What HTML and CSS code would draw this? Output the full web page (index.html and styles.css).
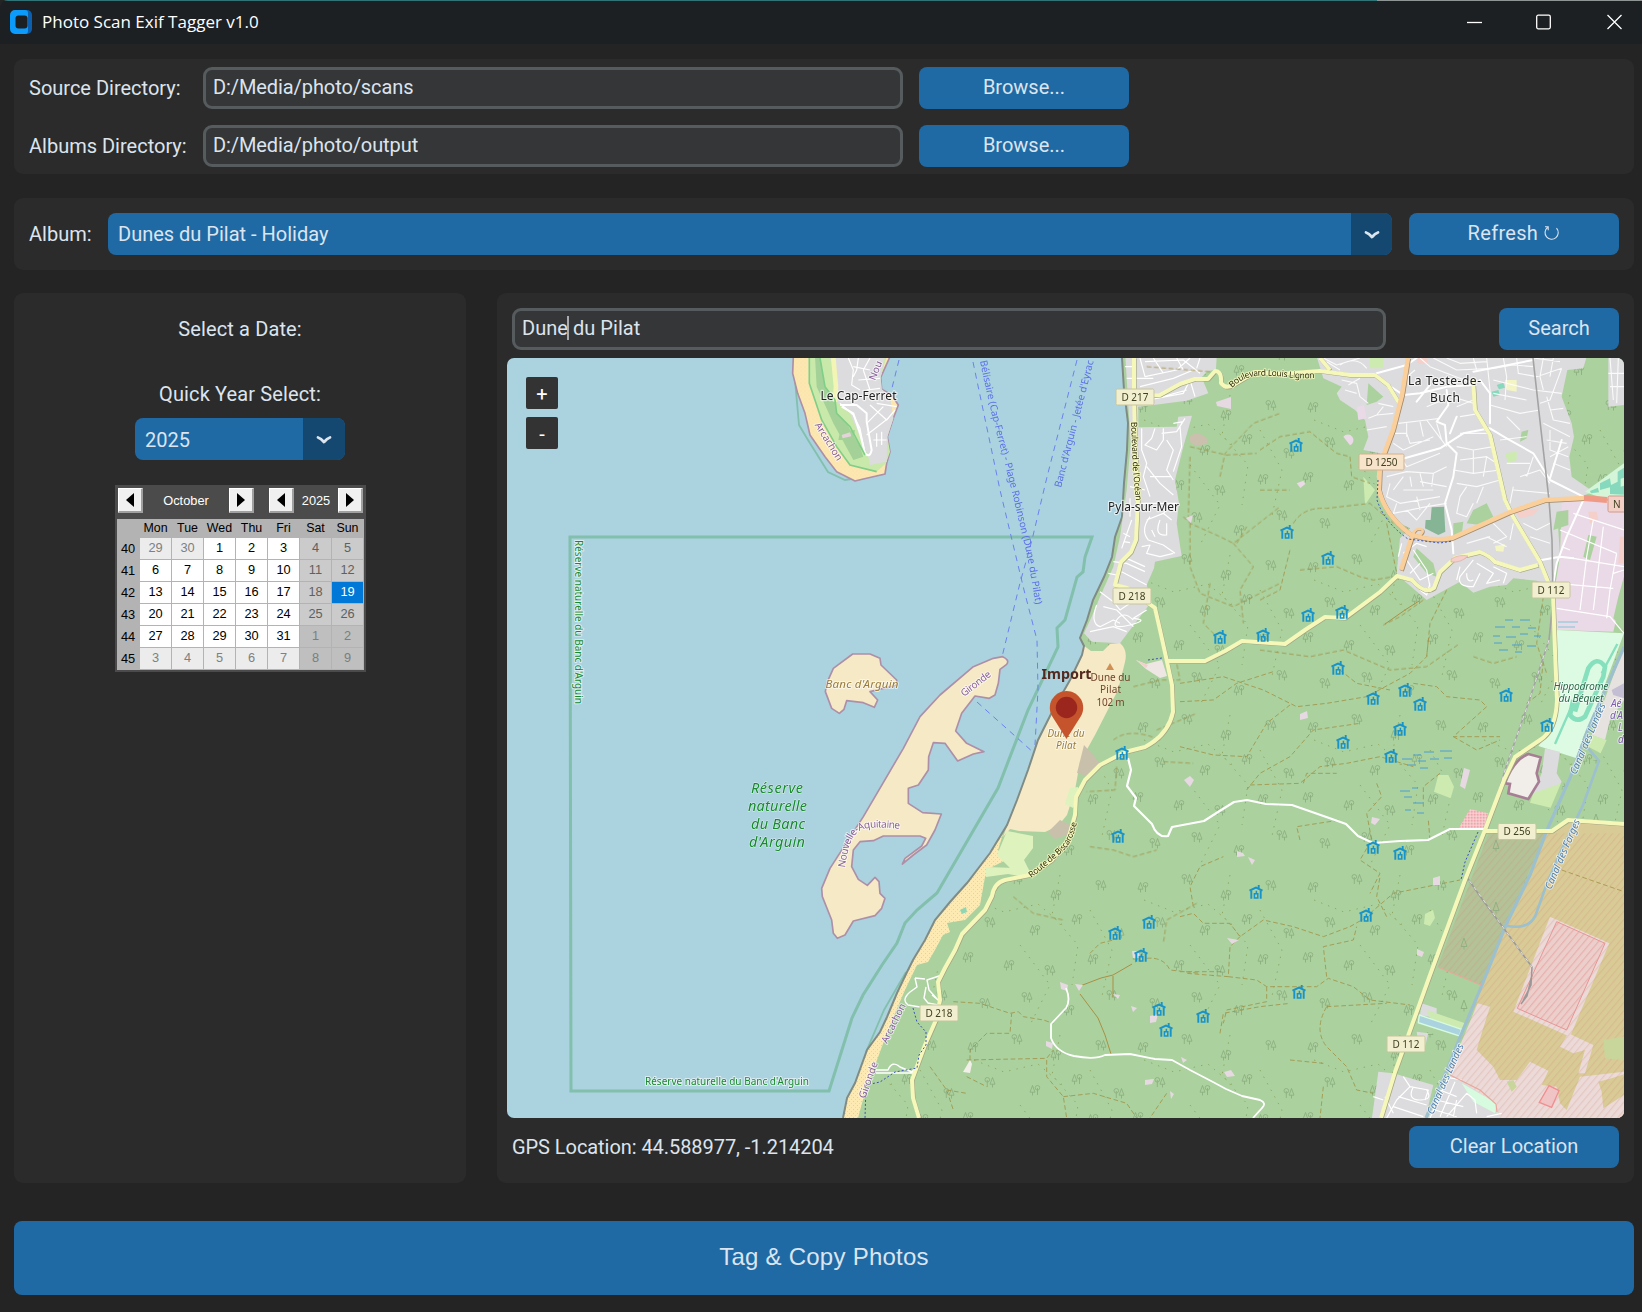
FILE: index.html
```html
<!DOCTYPE html>
<html lang="en">
<head>
<meta charset="utf-8">
<title>Photo Scan Exif Tagger v1.0</title>
<link rel="stylesheet" href="styles.css">
</head>
<body>
<header class="titlebar">
  <svg class="logo" width="24" height="26" viewBox="0 0 24 26"><rect x="5" y="1" width="18" height="24" rx="5" fill="#0a5fae"/><path d="M6 1h10a3 3 0 0 1 3 3v18a3 3 0 0 1-3 3H6a5 5 0 0 1-5-5V6a5 5 0 0 1 5-5z" fill="#0c9bfb"/><rect x="6.500" y="6.500" width="12" height="13" rx="3" fill="#1c2023"/></svg>
  <span class="title">Photo Scan Exif Tagger v1.0</span>
  <div class="winbtns">
    <svg width="15" height="16" viewBox="0 0 15 16"><path d="M0 8.500h15"/></svg>
    <svg width="15" height="16" viewBox="0 0 15 16"><rect x=".7" y="1.200" width="13.600" height="13.600" rx="1.500"/></svg>
    <svg class="close" width="15" height="16" viewBox="0 0 15 16"><path d="M.5 1l14 14M14.500 1L.5 15"/></svg>
  </div>
</header>
<main>
  <section class="panel dirs">
    <label>Source Directory:</label><div class="entry">D:/Media/photo/scans</div><button>Browse...</button>
    <label>Albums Directory:</label><div class="entry">D:/Media/photo/output</div><button>Browse...</button>
  </section>
  <section class="panel album">
    <label>Album:</label>
    <div class="option"><span>Dunes du Pilat - Holiday</span><i><svg width="16" height="10" viewBox="0 0 16 10"><path d="M2 2.500Q5 3.500 8 7Q11 3.500 14 2.500"/></svg></i></div>
    <button class="refresh">Refresh <svg class="reload" width="16" height="16" viewBox="0 0 16 16"><path d="M3.500 2.500A6.600 6.600 0 1 0 12.500 3.200M1 1.800h3.200v3.400"/></svg></button>
  </section>
  <div class="columns">
    <section class="panel date">
      <p class="pick">Select a Date:</p>
      <p class="quick">Quick Year Select:</p>
      <div class="option year"><span>2025</span><i><svg width="16" height="10" viewBox="0 0 16 10"><path d="M2 2.500Q5 3.500 8 7Q11 3.500 14 2.500"/></svg></i></div>
      <div class="calendar">
        <div class="calhead"><b class="prev"></b><span class="month">October</span><b class="next"></b><b class="prev gap"></b><span class="yr">2025</span><b class="next"></b></div>
        <div class="days">
          <span></span><em>Mon</em><em>Tue</em><em>Wed</em><em>Thu</em><em>Fri</em><em>Sat</em><em>Sun</em>
          <span>40</span><u class="o">29</u><u class="o">30</u><u>1</u><u>2</u><u>3</u><u class="w">4</u><u class="w">5</u>
          <span>41</span><u>6</u><u>7</u><u>8</u><u>9</u><u>10</u><u class="w">11</u><u class="w">12</u>
          <span>42</span><u>13</u><u>14</u><u>15</u><u>16</u><u>17</u><u class="w">18</u><u class="sel">19</u>
          <span>43</span><u>20</u><u>21</u><u>22</u><u>23</u><u>24</u><u class="w">25</u><u class="w">26</u>
          <span>44</span><u>27</u><u>28</u><u>29</u><u>30</u><u>31</u><u class="wo">1</u><u class="wo">2</u>
          <span>45</span><u class="o">3</u><u class="o">4</u><u class="o">5</u><u class="o">6</u><u class="o">7</u><u class="wo">8</u><u class="wo">9</u>
        </div>
      </div>
    </section>
    <section class="panel place">
      <div class="search"><div class="entry">Dune<span class="caret"></span> du Pilat</div><button class="small">Search</button></div>
      <div class="map">
<svg width="1117" height="760" viewBox="507 358 1117 760">
<defs>
  <g id="pair" class="tree"><circle cx="2.300" cy="2.800" r="2.300"/><path d="M2.300 3v7M7.500 0.500L5 7.200h5zM7.500 7.200v3.300"/></g>
  <g id="riap" class="tree"><circle cx="7.500" cy="2.800" r="2.300"/><path d="M7.500 3v7M2.500 0.500L0 7.200h5zM2.500 7.200v3.300"/></g>
  <g id="fir" class="tree"><path d="M4 0L1 8.500h6zM4 8.500v3"/></g>
  <pattern id="wood" width="170" height="160" patternUnits="userSpaceOnUse" x="1130" y="390">
    <use href="#riap" x="8" y="12"/><use href="#pair" x="52" y="4"/><use href="#riap" x="91" y="20"/><use href="#pair" x="136" y="10"/>
    <use href="#pair" x="25" y="47"/><use href="#riap" x="70" y="55"/><use href="#riap" x="112" y="44"/><use href="#pair" x="154" y="58"/>
    <use href="#riap" x="3" y="82"/><use href="#riap" x="44" y="90"/><use href="#pair" x="85" y="95"/><use href="#riap" x="128" y="84"/>
    <use href="#pair" x="20" y="128"/><use href="#pair" x="62" y="122"/><use href="#riap" x="104" y="135"/><use href="#pair" x="147" y="120"/>
    <path class="dots" d="M14 30l30 12 34-8 28 24M100 5l-8 40 26 30-6 40M60 75l30 40-20 40M130 40l22 40-10 46"/>
  </pattern>
  <pattern id="firs" width="66" height="62" patternUnits="userSpaceOnUse"><use href="#fir" x="8" y="8"/><use href="#fir" x="40" y="34"/></pattern>
  <pattern id="sandDots" width="4" height="4" patternUnits="userSpaceOnUse"><rect width="4" height="4" fill="#fde9b2"/><rect x="1" y="1" width="1" height="1" fill="#f2cb92"/><rect x="3" y="3" width="1" height="1" fill="#f4d59f"/></pattern>
  <pattern id="stripe" width="16" height="9" patternUnits="userSpaceOnUse" patternTransform="rotate(40)"><path d="M2 0V9" stroke="#cf8f80" stroke-opacity=".3" stroke-width="3"/></pattern>
  <pattern id="redStripe" width="16" height="9" patternUnits="userSpaceOnUse" patternTransform="rotate(40)"><rect width="16" height="9" fill="#eccfcb"/><path d="M2 0V9" stroke="#e6a9a8" stroke-width="3"/></pattern>
  <pattern id="orchard" width="9" height="9" patternUnits="userSpaceOnUse"><rect width="9" height="9" fill="#f5c3c6"/><rect x="1" y="1" width="3" height="3" fill="#e77f8d"/><rect x="5" y="5" width="3" height="3" fill="#fbe0e0"/></pattern>
  <g id="hut"><path d="M.5 6.200L7 3l6.500 3.200" stroke-width="2"/><path d="M9.700 4V.4M2.300 6v8.200M11.700 6v8.200" stroke-width="1.900"/><path d="M5.400 13.600V9.300h3.400v4.300zM7.400 9V6.200" stroke-width="1.500"/></g>
</defs>
<rect x="507" y="358" width="1117" height="760" fill="#aad3df"/>

<!-- nature reserve outline -->
<path class="reserve" d="M570 537H1092L1085 557 1083 572 1077 577 1065 620 1057 628 1058 647 1028 710 998 788 937 893 917 910 905 923 897 943 882 965 863 995 852 1018 829 1091H571Z"/>
<path class="reserve thin" d="M906 972L884 1010 866 1052M795 380L799 425 808 440 828 472 845 480 884 474"/>

<!-- mainland -->
<path id="land" d="M1122 358L1124 390 1128 423 1127 450 1124 483 1122 517 1115 537 1112 557 1104 577 1093 600 1087 620 1080 638 1084 646 1082 655 1070 680 1053 710 1038 740 1028 770 1017 800 1007 825 990 853 967 883 950 902 935 920 925 940 913 960 907 972 897 993 887 1017 880 1032 867 1050 855 1083 847 1098 843 1118H1624V358Z" fill="#abd19e"/>
<path d="M1122 358L1124 390 1128 423 1127 450 1124 483 1122 517 1115 537 1112 557 1104 577 1093 600 1087 620 1080 638 1084 646 1150 660 1100 780 1050 850 990 900 930 980 870 1118H1560L1624 900V358Z" fill="url(#wood)"/>

<!-- dune and beaches -->
<path d="M1083 645L1091 651 1103 651 1110 644 1120 643Q1128 650 1125 662L1118 690 1095 735 1080 762 1075 790 1067 815 1058 826 1045 832 1019 831 1010 829 1003 837 1017 800 1028 770 1038 740 1053 710 1070 680 1082 655Z" fill="#f5e9c6"/>
<path d="M1003 834L998 850 1006 860 990 868 985 877 980 905 965 920 947 923 950 932 943 935 935 950 928 962 917 965 905 990 890 1025 877 1060 867 1085 858 1118H843L847 1098 855 1083 867 1050 880 1032 897 993 913 960 935 920 967 883Z" fill="url(#sandDots)"/>
<path d="M1084 745L1095 757 1101 765 1090 777 1077 773ZM1048 832L1060 820 1072 826 1070 834 1055 839Z" fill="#c8c0ab"/>
<path d="M1007 831L1033 836 1033 848 1024 860 1030 872 1010 868 997 855ZM1070 788L1078 787 1078 800 1073 808 1065 804ZM986 867L1015 868 1029 872 1025 877 1008 874 986 877Z" fill="#ddf2bd"/>
<path d="M960 910l6-3 1 5-5 2z" fill="#8fd6b4"/>
<path d="M1136 660L1146 664 1162 660 1167 676 1160 678 1146 669Z" fill="#eee6e2"/><path d="M1136 660l12 5 -2 3z" fill="#f3cfcc"/>

<!-- Cap-Ferret -->
<g transform="translate(500 290) scale(.33333)">
  <path class="coast" fill="url(#sandDots)" d="M880 200L878 250 893 310 915 370 930 435 975 500 1010 545 1065 573 1090 567 1155 552 1160 520 1170 485 1162 440 1180 385 1195 345 1175 315 1145 298 1142 262 1170 200Z"/>
  <path d="M928 200L928 280 965 390 1010 470 1050 525 1130 545 1158 520 1170 485 1162 440 1180 385 1170 320 1145 298 1142 262 1160 200Z" fill="#c9e9ab"/>
  <path d="M960 200L975 290 1005 330 1010 370 1040 400 1080 470 1090 500 1060 510 1000 400 950 290 945 200ZM1020 425L1065 420 1060 450 1015 450Z" fill="#a4d197"/>
  <path d="M990 200L1005 290 1010 335 1050 370 1105 500 1110 525 1160 515 1162 440 1180 385 1170 320 1145 298 1142 262 1155 200Z" fill="#dcdbdd"/>
  <path class="street" d="M1045 204L1060 240 1055 285 1080 300M1075 204L1070 240 1060 260M1110 204L1090 240 1110 300M1060 230L1110 240M1075 270L1140 265M1100 300L1140 295M1130 340L1190 350M1110 345L1160 390 1185 360M1100 400L1150 350M1100 435L1165 385M1130 430L1130 470M1145 425L1145 465M1120 450L1160 450M1020 340L1060 375 1080 415 1095 490"/>
  <path class="street big" d="M1020 345L1070 345 1100 370 1100 395 1115 480Q1110 505 1095 490L1080 430 1060 370 1025 350"/>
  <path d="M1000 204L1008 290 1005 335" fill="none" stroke="#f3f5b4" stroke-width="14"/>
  <path d="M928 204L928 280 965 390 1010 470 1050 525 1130 545M960 204L975 290 1005 330 1010 370 1050 410 1095 495" fill="none" stroke="#7fcf88" stroke-width="5"/>
  <path d="M1025 435l25-8 4 12-26 6z" fill="#e5d3da"/>
</g>
<!-- sandbanks -->
<g transform="translate(780 630) scale(.33333)" fill="#f5e9c6">
  <path class="coast" d="M140 160L160 115 218 72 270 72 300 85 303 105 350 150 352 165 270 185 293 210 283 232 250 218 200 212 192 238 178 250 155 235 136 185Z"/>
  <path class="coast" d="M580 110L640 85 668 80Q690 90 680 103L660 118 655 160 645 195 628 205 585 198 545 250 527 303 560 340 612 365 580 372 533 393 495 340 460 338 446 380 445 420 415 465 385 475 385 520 428 548 484 552 465 600 440 645 400 675 367 702 375 685 425 648 437 625 420 618 310 618 280 632 240 635 220 660 215 710 235 748 262 766 285 742 297 755 300 790 315 805 305 835 285 857 220 873 195 915 172 925 160 910 155 870 127 800 125 775 150 715 250 560 370 355 420 260 480 195Z"/>
</g>
<path class="shore" d="M1122 358L1124 390 1128 423 1127 450 1124 483 1122 517 1115 537 1112 557 1104 577 1093 600 1087 620 1080 638 1084 646 1082 655 1070 680 1053 710 1038 740 1028 770 1017 800 1007 825 990 853 967 883 950 902 935 920 925 940 913 960 907 972 897 993 887 1017 880 1032 867 1050 855 1083 847 1098 843 1118"/>

<!-- Pyla-sur-Mer -->
<g transform="translate(900 290) scale(.33333)">
  <path fill="#dcdbdd" d="M676 200L950 200 948 238 920 245 905 262 925 310 860 332 755 346 715 350 715 412 830 410 835 380 876 377 850 470 825 570 837 640 830 700 845 798 765 815 762 835 740 885 755 935 720 980 660 1060 575 1055 552 1030 575 980 600 920 640 830 660 740 680 600 692 460Z"/>
  <path class="street" d="M675 230H700M680 265H760M720 204L735 260 830 240 870 204M760 204L790 250M735 215L850 210 900 250M720 290L820 265 880 240M745 330L850 310 870 270 885 320M770 325L860 300M830 204L850 240M900 204L890 235M725 415V480L740 520 730 560 750 620M765 415L755 445 735 465 770 480 790 450 790 415M785 430L830 425 855 385M800 450L820 480 800 540 820 570M740 530L780 580 820 615M750 560H815M690 625V680M725 640L830 640M735 600L690 590M695 690L665 775M670 730L690 740M672 755L690 758M750 680Q720 720 745 750L790 765 825 790M740 690L790 670 815 690M780 690Q760 740 800 735L800 700M790 670L810 650M725 770L750 765 740 790 780 800 820 790M755 720L765 740M625 850L650 855M640 815L680 820 735 845M680 805L735 830M665 845L740 885M600 905L640 935M590 945Q570 1000 600 1010L640 990 660 1000M610 950L650 960 700 1010M640 935L660 960 690 940M700 990Q670 960 650 990T690 1005 700 985L740 960M570 1025L640 1010 680 1025M840 410L845 470 820 545M820 400L850 395"/>
</g>
<!-- La Teste-de-Buch -->
<g transform="translate(1260 290) scale(.33333)">
  <path fill="#dcdbdd" d="M170 200L980 200 970 235 922 240 905 320 935 400 942 440 928 500 935 560 1000 605 930 632 893 690 900 800 870 885 830 872 760 865 740 885 690 890 640 908 600 875 500 930 430 870 410 850 420 745 450 715 400 690 375 640 350 560 360 490 310 480 325 440 315 390 285 360 240 330 230 310 245 290 190 265Z"/>
  <path fill="#dcdbdd" d="M1045 200H1092V345L1045 350Z"/>
  <path fill="#ead9e6" d="M905 640L975 622 1092 640V860L1080 940 1060 1025 890 1020 885 950 885 890 900 800Z"/>
  <path fill="#abd19e" d="M325 280L370 320 350 335 320 345ZM640 660L680 640 700 680 660 705 620 700ZM580 700L610 695 605 735 580 740ZM890 665L925 660 925 705 880 720ZM985 735L1010 740 990 810 970 800ZM785 425L805 420 800 445 780 455ZM1092 860L1075 920 1060 985 1092 1020ZM470 775L520 820 530 860 500 850 460 800Z"/>
  <path fill="#86b596" d="M515 652L552 650 556 725 535 735 495 715 497 690 512 690Z"/>
  <path fill="#d4f5d8" d="M975 605L1092 520V640L1000 615Z"/>
  <path fill="#86d9bc" d="M695 305l20-5 5 15-20 5zM710 285l20-7 5 15-18 5zM1020 580l30-15 3 20 20-10V545l19-12v30l-10 3v24l10-3v27l-42-2v-20l-30 8zM990 603l24-10 3 14-24 3z"/>
  <path fill="#cdebb0" d="M330 204H368L372 235 330 235ZM735 490L770 485 770 510 745 520ZM310 560L345 600 315 645Z"/>
  <path fill="#f3f5c4" d="M735 270L770 270 770 305 740 300ZM705 768l30-5-5 22-22-2z"/>
  <path fill="#f5cfc9" d="M468 204H500L503 222 475 220ZM765 665L840 655 820 675 780 685ZM985 665L1010 665 1015 690 990 700ZM1080 740H1092V820H1075Z"/>
  <path fill="#ead9e6" d="M250 440a17 17 0 1 1 20 26zM110 580l20-8 6 10-15 12zM290 350L312 345 320 385 295 390Z"/>
  <path class="street fine" d="M200 215L240 240M245 270L290 280 300 320 325 340M265 285L300 265M255 300L290 310M190 204L230 225 300 204M240 225Q290 195 320 235M355 340L400 350M325 385L350 375 400 370M320 420L380 410M350 375L370 350M465 240L430 270M480 204L510 230 560 250 640 280M520 204L590 240 700 235 760 225 820 230M560 204L600 220 680 215M640 204L650 240M680 204L690 300 690 380M730 204L740 260 735 330M770 204L775 250 830 260 905 235M820 204L900 215M850 204L840 260 850 300M880 204L870 260M905 235L870 330 840 340M700 270L820 300 905 310M700 310L800 330M690 345L780 370 840 360M860 320L880 390 930 400M870 360L910 355M850 400L930 440M720 450L800 440M740 380L780 420M870 420L870 480 925 500M860 450L920 460M880 520L930 540M870 500L925 470M415 400L500 390 540 385M405 430L440 430 450 460 510 450M400 460L430 480 520 440M440 400L440 440M480 395L490 440M500 390L530 430 560 470M530 400L545 450M420 500L440 530 540 490M380 560L440 545 520 550 560 530M400 600L430 560M390 580L380 620 420 640 540 620M410 640L400 670 500 650 560 640M430 600L520 600M450 560L455 590M480 550L490 590M520 550L515 590M560 590L480 575M440 660L470 690 510 640M470 620L480 660M590 470L640 480 700 470M600 510L680 500 710 520M600 430L690 430M580 540L640 550 720 540M590 580L650 590 720 570M640 480L640 550M620 590L600 620 590 670 620 680 640 640M680 500L670 560M670 590L650 640M590 350L640 330M600 380L660 370M575 320L640 340M530 310L500 300M500 350L550 330M780 560L840 540 870 580M760 600L870 610M750 640L760 590M740 520L810 520M820 500L800 560M790 700L830 720 870 700M810 740L870 760M700 700L740 740 700 760M760 700L750 750M680 740L740 770M620 760L690 740M1050 204L1060 330M1075 204L1070 340M1045 250H1092M1050 290H1092"/>
  <path class="street" d="M430 790L470 760 500 770M440 810L480 870 520 850M450 850L480 820M460 780L500 840 510 890M480 900L500 915 510 880M600 830L590 870M640 810L600 860Q590 890 640 890L660 850M650 820L700 850 680 880 720 870M700 830L740 850 730 880M620 850Q620 880 640 870M425 760L415 800"/>
  <path class="street" d="M940 670L1092 720M900 720L1070 790M890 880L1060 895M940 805L1092 830M1000 690L980 800 960 960M1030 710L1000 960M1070 790L1050 900 1040 985M890 955L1050 980 1092 1030M905 770L930 780M1060 850L1092 840"/>
  <path class="street big" d="M350 250L440 225 470 204M355 265L430 315 480 310 560 290 640 285M510 285L470 335M660 270L690 310 690 400M560 300L565 345 530 395 555 405 560 460 590 490 580 560 555 640 575 720 580 790M415 510L540 475 610 430 690 415 740 445 820 490 870 570 970 620M590 380L570 430M640 245L820 210M970 630L920 740 890 820 880 880M845 810L900 800 940 805M905 450L870 565" stroke-linecap="round"/>
</g>

<!-- hippodrome, airport and military area -->
<g transform="translate(1180 640) scale(.33333)">
  <path fill="#ddfbe3" d="M1130 -30L1332 -20 1250 200 1210 290 1190 355 1075 318 1110 275 1132 220Z"/>
  <path fill="#e6e2e0" d="M1332 20V180L1290 240 1275 300 1235 285Z"/>
  <path fill="#c3bed2" d="M1295 150L1332 130V175L1300 165Z"/>
  <path fill="none" stroke="#86e0bd" stroke-width="14" d="M1185 215L1225 85Q1250 45 1275 80L1270 110 1215 230Q1190 250 1170 225L1180 180"/>
  <path fill="none" stroke="#86e0bd" stroke-width="7" d="M1312 12L1265 100M1170 210L1125 312"/>
  <path fill="#dcdbdd" d="M1095 325L1140 335 1130 400 1145 425 1115 470 1060 460 1085 400Z"/>
  <path fill="#cdebb0" d="M1060 460L1143 430 1112 503 1050 488ZM775 405L805 405 822 440 812 475 762 455ZM1235 285L1280 300 1262 340 1225 320Z"/>
  <path fill="#f1eeea" stroke="#a77f94" stroke-width="8" d="M1045 342L1082 352 1070 400 1077 425 1045 477 985 460 990 432 975 430Q1000 360 1045 342Z"/>
  <path fill="url(#orchard)" d="M870 507L925 520 910 567 836 565Z"/>
  <path fill="#b4c297" d="M925 583L1095 580 905 1035 773 980Z"/>
  <path fill="#d9cb96" d="M1100 580L1180 545 1332 555V1434H900L850 1220 905 1035Z"/>
</g>
<path d="M1488 835L1545 833 1482 985 1438 967ZM1570 765L1624 755V820L1550 822ZM1440 970L1482 987 1467 1023 1420 1020ZM1420 1030L1455 1040 1440 1085 1410 1070Z" fill="url(#firs)"/>
<g transform="translate(1180 900) scale(.33333)">
  <path fill="#ecdad8" d="M893 310L930 320 905 400 890 450 940 500 960 540 1010 540 1050 485 1105 512 1085 555 1130 560 1140 610 1160 630 1200 530 1332 515V660H965L945 610 805 520ZM1140 440L1165 400 1240 435 1215 520 1195 520 1215 450 1180 460ZM1000 335L1110 50 1288 130 1170 410Z"/>
  <path fill="#d9cb96" d="M1255 545l40-10 37-12v62l-62 40-5-50z"/>
  <path fill="url(#stripe)" d="M1100 -200H1332V654H965L945 610 805 520 905 255ZM775 200L925 -200 1100 -200 905 255Z"/>
  <path fill="url(#redStripe)" stroke="#e79696" stroke-width="3" d="M1130 65L1275 130 1160 390 1012 325Z"/>
  <path fill="#f0c4c4" stroke="#ef8f8f" stroke-width="4" d="M1107 557l30 15-22 50-37-15z"/>
  <path fill="#c9d69b" d="M1270 420L1332 410V480L1275 475ZM980 545l20-5 10 20-15 15z"/>
  <path fill="#dcdbdd" d="M595 515L640 520 760 555 735 660H575Z"/>
  <path fill="#dcdbdd" d="M810 520L945 610 965 660H740ZM725 310L770 325 770 355 720 345ZM710 395L745 400 735 440 715 430Z"/>
  <path fill="#d6fbdf" d="M845 550L950 610 945 640 880 605Z"/>
  <path fill="#cdebb0" d="M740 330L855 370 845 390 750 355Z"/>
  <path fill="#aad3df" stroke="#d6fbdf" stroke-width="4" d="M718 345L845 388 838 408 715 368Z"/>
  <path class="street" d="M670 530L690 560 650 600 620 654M690 560L745 570 735 600M655 590L740 615M640 620L730 650M700 560Q680 600 720 600T740 570M615 590L640 640M580 590L610 600M800 540L750 654M825 545L780 650M780 570L830 590M770 600L850 620M800 650L860 580 885 600 890 640M830 600L820 650M765 630L830 650M790 530L845 540M920 650L965 640"/>
</g>

<!-- tracks -->
<g class="track">
  <path transform="translate(1260 290) scale(.33333)" d="M0 480L60 440 150 425 180 450 230 490 270 500 275 560 330 580M0 600L90 600M100 700Q130 650 200 655L330 640 400 700M120 840L230 830 300 860 340 870 400 860M0 930L60 900 90 780M380 700L410 850M490 930L420 980 370 1005M500 1100L510 1000 560 900M0 1080L150 1100 250 1080 390 1140 500 1130 600 1060M850 920L830 1060 860 1150M640 1100L700 1120 770 1100"/>
  <path transform="translate(900 290) scale(.33333)" d="M740 230L930 245M870 470L980 495 1070 490M960 560L975 490 1060 400 1140 370M850 680L870 700 960 740 1000 760 1140 650M870 700L870 830 900 910 1000 950 1140 880M1000 760L1060 830 1020 900 1030 1000M870 500L865 680M930 880L910 1000 950 1040M1040 710L1010 760"/>
  <path transform="translate(780 630) scale(.33333)" d="M1060 170L1140 150 1200 150 1190 100M1000 330Q1050 290 1140 330M1150 395L1240 400M1010 410L1005 480 920 485M930 650L1000 660 1060 680 1130 660M700 800L760 850 850 870M1250 820L1160 870 1150 940M1130 300L1250 250"/>
  <path transform="translate(1180 640) scale(.33333)" d="M0 185L100 180 170 130 280 95M0 130L130 110 250 150 350 200 440 190 560 170 690 100 740 50 745 0M0 320L100 345 200 350 260 250 330 195M200 450L240 400 330 350 400 270 540 250M210 435L360 430 420 380 500 370 600 350 700 380M370 430L380 400 470 400M590 430L605 470 560 520 575 600 540 660 600 700 570 760M480 90L530 130 630 150M700 130L770 140 800 170 900 180 920 200 820 290 960 290M730 500L730 440 780 400M820 290L890 330 960 300M1040 190L1080 160 1090 60M0 830L40 820 70 850 150 850 180 890 250 840 340 860 430 890 510 860 580 820M180 890L150 920 145 1010 20 1000M40 800L30 740 60 680 130 650M360 600L350 560 480 540M570 820L640 760 840 720M750 600L745 540M440 1010L430 920 520 900 530 860M145 1010L230 1020 260 1040 410 1040 445 1015 520 1040 570 1080 690 1095M260 1040L260 1085 140 1110 130 1150M620 830L590 770 600 710M1145 690L1332 755"/>
  <path transform="translate(1180 900) scale(.33333)" d="M0 215L130 215M120 400L130 340 240 320 330 310M440 320L620 310M440 320Q400 390 440 440L500 500 530 570 580 580M330 480L430 490M430 560L420 654"/>
  <path transform="translate(780 880) scale(.33333)" d="M520 365L600 370 690 400 715 395 730 410 790 420 820 430M570 540L570 510 620 460 690 460 695 400M450 560L500 630 520 690M500 630L560 640M560 590L620 620M560 540L800 535 820 510M800 540L800 590 850 650 860 714M850 650L940 640 1040 670 1070 714M1160 640L1110 714M1100 235Q1150 230 1170 270L1260 280M930 220L960 190 1000 180"/>
</g>
<g fill="none" stroke="#aa8f45" stroke-width="1">
  <path d="M1080 986L1101 978 1113 975 1132 964M1113 976V997M1080 994L1098 1018 1105 1035 1111 1054M1385 624L1405 610 1419 601"/>
</g>
<g fill="#e6d9e2">
  <path d="M1216 402l15-5v12l-14-3zM1186 518l7-3-2 8zM1300 714l7-3 1 7-8 2zM1184 780l6-4 4 4-4 7zM1237 851l6 2 2 3-8 1zM1248 857l7 3-3 5zM1227 938l12 2-7 4zM1060 982l8 3-1 6-6-2zM1075 984l8 1-4 6zM1046 1041l7 2-1 6-6-3zM1132 951h7v7h-6zM1150 1016l8-2-2 8-6 1zM1131 1006l6 2-4 4zM1113 994l7 1-2 4zM1145 1080l9-1-2 5-7 1zM1170 1091l4 3-3 5zM1181 1057l6 3-4 3zM1224 1072l7-2 4 6-8 1zM1433 878l7-2v9h-7zM1372 817l8 2-5 6-4-2zM1417 949l7 3-2 5-5-2zM1464 768l6 2-2 8-3 11-5-3z"/>
</g>
<path d="M1190 436q7-5 14 0t2 8l-10 2-6-4z" fill="#cbbfae"/>
<path d="M970 1060l2 4-2 9-7-1z" fill="#f2efe9"/>
<path d="M1425 914l8-4 2 8-5 8-6-2z" fill="#cdebb0"/>
<path class="marsh" d="M1505 620h8M1520 620h10M1495 627h10M1512 627h8M1528 628h8M1493 636h7M1506 637h10M1520 634h8M1534 636h7M1494 643h8M1512 645h9M1527 646h9M1499 650h9M1515 652h7M1413 755h8M1424 752h10M1440 751h12M1402 759h10M1418 761h8M1430 759h9M1444 758h8M1407 765h9M1420 768h8M1400 791h10M1412 788h6M1404 797h8M1413 803h10M1405 810h6M1417 813h7"/>
<path d="M1558 622h20M1558 627h17" stroke="#a3cbdc" stroke-width="1.500"/>

<!-- canals -->
<g fill="none" stroke="#9cc0ce" stroke-width="3.200">
  <path d="M1624 647L1588 729 1570 778 1547 830 1530 875 1506 925 1482 985 1460 1037 1447 1070 1426 1118"/>
  <path d="M1588 748L1599 761 1583 805 1560 853 1546 886 1536 914Q1530 930 1507 926" stroke-width="2.600"/>
</g>

<!-- railways -->
<path d="M1533 358L1541 430 1549 500 1552 540 1553 600 1549 640 1528 704 1505 770 1490 822 1466 876" fill="none" stroke="#a3a3a3" stroke-width="1.600"/>
<path d="M1466 876L1482 899 1505 930 1532 967 1531 985 1523 1001M1532 975L1527 996 1521 1004" fill="none" stroke="#999" stroke-width="1.500"/>
<path d="M1549 640L1528 704 1505 770 1490 822 1466 876 1505 930 1532 967" fill="none" stroke="#f4f4f4" stroke-width=".8" stroke-dasharray="4 4"/>

<!-- minor roads -->
<g class="white">
  <path d="M1128 758L1131 770 1127 786 1136 798 1134 806 1152 824Q1157 838 1168 836L1172 827 1204 821 1218 812 1234 802 1247 800 1266 804 1292 805 1312 812 1332 819 1346 824 1358 836 1373 843 1400 841 1428 840 1450 829H1484"/>
  <path d="M1066 988Q1071 1000 1066 1008L1051 1024V1038Q1056 1052 1074 1056 1095 1060 1105 1055L1130 1054 1155 1059 1172 1060 1190 1070 1213 1082 1226 1089 1242 1096 1260 1100Q1267 1103 1262 1108L1253 1118" stroke-width="1.800"/>
  <path d="M942 975L927 980 929 990 938 1000 932 995M938 1005L928 1003 924 998 926 987M915 978L917 987 910 992Q901 1000 908 1005L920 1007M915 978L925 979M875 1070L888 1070Q892 1060 900 1067L912 1072 915 1068M876 1073H915" stroke-width="1.400"/>
</g>

<!-- secondary roads -->
<g class="roadcase"><use href="#sec"/></g>
<g class="road" id="sec">
  <path d="M1134 358V390L1135 440 1138 500 1136 540 1131 552 1121 562 1115 585 1127 588 1155 608 1160 630 1166 657 1172 685 1173 712Q1168 735 1145 747L1125 752 1100 765 1085 780 1076 797 1075 815 1068 840 1052 860 1030 875 1005 880Q994 883 992 896L985 910 962 934 955 950 945 968 938 982 940 1000 936 1020 925 1045 912 1080 913 1098 919 1118"/>
  <path d="M1134 396L1160 395 1180 384 1195 379 1208 379 1215 371Q1222 371 1221 383 1226 390 1235 384L1255 372 1280 374 1320 371 1350 375 1375 375 1388 385 1399 403"/>
  <path d="M1320 358L1330 370M1166 661L1205 661 1225 651 1242 641 1285 644 1305 630 1325 617 1345 618 1380 592 1397 576 1412 580Q1425 595 1434 588L1440 572 1455 558 1480 552Q1490 556 1495 562L1520 570 1538 565"/>
  <path d="M1473 378L1475 410 1490 435 1505 500 1512 515 1540 562 1553 594 1555 650 1557 700Q1556 730 1540 740L1515 757 1504 780 1485 830 1465 880 1430 975 1395 1072 1381 1118"/>
  <path d="M1486 831H1552L1568 820 1624 824"/>
</g>
<path d="M1451 559q8-5 17-3-7 7-17 6z" fill="#f5cfc9" stroke="#d9a79c" stroke-width=".6"/>
<!-- primary roads -->
<g class="pricase"><use href="#pri"/></g>
<g class="pri" id="pri">
  <path d="M1408 358L1402 395 1393 430 1380 465 1379 490Q1385 515 1410 534 1430 542 1452 538L1510 512 1545 500 1584 498M1413 533L1401 570"/><path d="M1413 536Q1414 528 1420 529T1419 536" stroke-width="2.500"/>
</g>
<path d="M1584 498L1607 500" stroke="#f09a86" stroke-width="6"/>
<path d="M1438 967L1481 985M1450 1075L1480 1090 1496 1104 1497 1112" fill="none" stroke="#e7a79b" stroke-width="1.200"/>
<path class="cycle" d="M913 1008L917 1022 926 1032 926 1045 919 1055 917 1068 895 1072 880 1082 866 1085 865 1118M1378 480L1377 500Q1384 522 1408 539L1440 543 1453 541M1478 832L1465 862 1461 880M1148 660L1162 658"/>

<!-- ferries -->
<path class="ferry" d="M973 362L1000 490 1024 590 1037 640 1038 690 1035 745M1077 360L1047 477 1032 540 1020 583 1002 657M977 702L1034 753M899 360L892 388"/>

<!-- huts -->
<g fill="none" stroke="#1793cb" transform="translate(-7 -7.500)">
<use href="#hut" x="1296" y="445"/><use href="#hut" x="1287" y="532"/><use href="#hut" x="1328" y="558"/><use href="#hut" x="1308" y="615"/><use href="#hut" x="1342" y="612"/><use href="#hut" x="1263" y="635"/><use href="#hut" x="1220" y="637"/><use href="#hut" x="1338" y="668"/><use href="#hut" x="1373" y="698"/><use href="#hut" x="1405" y="690"/><use href="#hut" x="1420" y="704"/><use href="#hut" x="1506" y="695"/><use href="#hut" x="1122" y="753"/><use href="#hut" x="1118" y="836"/><use href="#hut" x="1149" y="922"/><use href="#hut" x="1115" y="933"/><use href="#hut" x="1141" y="955"/><use href="#hut" x="1400" y="729"/><use href="#hut" x="1343" y="742"/><use href="#hut" x="1391" y="756"/><use href="#hut" x="1547" y="725"/><use href="#hut" x="1373" y="847"/><use href="#hut" x="1400" y="853"/><use href="#hut" x="1256" y="892"/><use href="#hut" x="1366" y="915"/><use href="#hut" x="1299" y="992"/><use href="#hut" x="1203" y="1016"/><use href="#hut" x="1159" y="1009"/><use href="#hut" x="1166" y="1030"/>
</g>

<!-- road shields -->
<g class="shield">
  <rect x="1116" y="389" width="38" height="16" rx="1.500"/><rect x="1113" y="588" width="38" height="16" rx="1.500"/><rect x="1532" y="582" width="38" height="16" rx="1.500"/><rect x="1498" y="823.500" width="38" height="16" rx="1.500"/><rect x="920" y="1005" width="38" height="16" rx="1.500"/><rect x="1387" y="1036" width="38" height="16" rx="1.500"/>
  <rect class="major" x="1359" y="454" width="45" height="16" rx="1.500"/><rect class="national" x="1608" y="496" width="30" height="16" rx="1.500"/>
</g>
<g class="ref">
  <text x="1121.500" y="400.500" textLength="27">D 217</text><text x="1118.500" y="600" textLength="27">D 218</text><text x="1537.500" y="593.500" textLength="27">D 112</text><text x="1503.500" y="835" textLength="27">D 256</text><text x="925.500" y="1017" textLength="27">D 218</text><text x="1392.500" y="1048" textLength="27">D 112</text>
  <text x="1365.500" y="465.500" textLength="32">D 1250</text><text x="1613" y="508">N</text>
</g>

<!-- labels -->
<g class="town">
  <text x="820.500" y="399.500" textLength="76">Le Cap-Ferret</text><text x="1108" y="510.500" textLength="71">Pyla-sur-Mer</text>
  <text x="1408" y="385" textLength="73">La Teste-de-</text><text x="1430" y="402" textLength="30">Buch</text>
</g>
<g class="green big"><text x="751" y="792.500" textLength="52">Réserve</text><text x="748" y="810.500" textLength="59">naturelle</text><text x="751" y="828.500" textLength="54">du Banc</text><text x="749" y="846.500" textLength="56">d'Arguin</text></g>
<g class="green"><text x="645" y="1085" textLength="164">Réserve naturelle du Banc d'Arguin</text><text transform="translate(574.500 540) rotate(90)" x="0" y="0" textLength="164">Réserve naturelle du Banc d'Arguin</text></g>
<g class="brown"><text x="825.500" y="688" textLength="73" class="bank">Banc d'Arguin</text></g>
<g class="brown"><text x="1047.500" y="736.500" textLength="37">Dune du</text><text x="1056" y="748.500" textLength="20">Pilat</text></g>
<g class="peak"><text x="1090.500" y="681" textLength="40">Dune du</text><text x="1100" y="693" textLength="21">Pilat</text><text x="1096.500" y="705.500" textLength="28">102 m</text></g>
<path d="M1106 670l4-7 4 7z" fill="#d08f55"/>
<g class="sport"><text x="1553.500" y="690" textLength="55">Hippodrome</text><text x="1558.500" y="702" textLength="45">du Béquet</text></g>
<g class="aero"><text x="1611" y="707">Aé</text><text x="1610" y="718.500">d'A</text><text x="1618" y="731">L</text><text x="1618" y="743">d</text></g>
<path id="pBel" d="M980 361Q990 410 1001 450T1028 560L1036 607" fill="none"/>
<path id="pEyr" d="M1061 488L1094 360" fill="none"/>
<path id="pLig" d="M1232 388Q1243 377 1256 376T1285 377 1316 378" fill="none"/>
<path id="pOce" d="M1131 422L1133 470 1136 502" fill="none"/>
<path id="pNou" d="M845 868Q848 840 858 832T908 830" fill="none"/>
<path id="pBis" d="M1031 878Q1052 862 1066 848 1074 838 1077 821" fill="none"/>
<g class="ferrytext"><text><textPath href="#pBel" textLength="250">Bélisaire (Cap-Ferret) - Plage Robinson (Dune du Pilat)</textPath></text><text><textPath href="#pEyr" textLength="131">Banc d'Arguin - Jetée d'Eyrac</textPath></text></g>
<g class="roadtext"><text><textPath href="#pLig" textLength="86">Boulevard Louis Lignon</textPath></text><text><textPath href="#pOce" textLength="79">Boulevard de l'Océan</textPath></text><text><textPath href="#pBis" textLength="74">Route de Biscarosse</textPath></text></g>
<g class="admin"><text><textPath href="#pNou" textLength="82">Nouvelle-Aquitaine</textPath></text><text transform="translate(964 697) rotate(-38)" textLength="35">Gironde</text><text transform="translate(814.500 425) rotate(58)" textLength="43">Arcachon</text><text transform="translate(887 1044) rotate(-64)" textLength="43">Arcachon</text><text transform="translate(865 1099) rotate(-70)" textLength="38">Gironde</text><text transform="translate(875 381) rotate(-68)">Nou</text></g>
<g class="water"><text transform="translate(1576 775) rotate(-67)" textLength="76">Canal des Landes</text><text transform="translate(1551 890) rotate(-67)" textLength="75">Canal des Forges</text><text transform="translate(1433 1115) rotate(-66)" textLength="76">Canal des Landes</text></g>

<!-- location marker -->
<path d="M1066.500 739L1052 716A16.700 16.700 0 1 1 1081 716Z" fill="#c5542d"/><circle cx="1066.500" cy="707.500" r="10.700" fill="#9b261e"/>
<text class="marker" x="1041.500" y="679" textLength="50" lengthAdjust="spacingAndGlyphs">Import</text>
</svg>
        <div class="zoom"><span>+</span><span>-</span></div>
      </div>
      <div class="gps"><label>GPS Location: 44.588977, -1.214204</label><button>Clear Location</button></div>
    </section>
  </div>
  <button class="submit">Tag &amp; Copy Photos</button>
</main>
</body>
</html>
```
FILE: styles.css
```css
* { box-sizing: border-box; }
body { margin: 0; width: 1642px; height: 1312px; overflow: hidden; background: #242424; color: #dce4ee; font: 20px/24px Roboto, sans-serif; display: flex; flex-direction: column; }
.titlebar { height: 44px; background: linear-gradient(90deg, #2f7477 1377px, #8f9595 1377px) 0 0 / 100% 1px no-repeat, #1c2023; border-radius: 8px 0 0 0; display: flex; align-items: center; padding: 0 9px 1px 9px; flex: none; }
.title { font: 17px/24px "Open Sans", sans-serif; color: #fff; margin-left: 9px; }
.winbtns { margin-left: auto; display: flex; gap: 54px; padding-right: 11px; }
.winbtns svg { fill: none; stroke: #fff; stroke-width: 1.3; }
.winbtns .close { margin-left: 2px; }
main { flex: 1; padding: 15px 8px 17px 14px; display: flex; flex-direction: column; }
.panel { background: #2b2b2b; border-radius: 9px; }
button { border: 0; border-radius: 8px; background: #1f6aa5; color: #dce4ee; font: inherit; width: 210px; height: 42px; padding: 0 0 2px; flex: none; }
label { white-space: nowrap; }
.entry { height: 42px; border: 3px solid #565b5e; border-radius: 9px; background: #343638; padding: 5px 7px; white-space: pre; position: relative; letter-spacing: -.09px; }
.dirs { height: 115px; padding: 8px 15px; display: grid; grid-template-columns: 157px 699px 210px; column-gap: 17px; row-gap: 16px; align-items: center; align-content: start; }
.dirs .entry { margin-right: -1px; }
.album { height: 72px; margin-top: 24px; padding: 0 15px; display: flex; align-items: center; }
.option { height: 42px; border-radius: 8px; background: #1f6aa5; overflow: hidden; display: flex; align-items: center; justify-content: space-between; padding-left: 10px; }
.option i { width: 41px; height: 42px; background: #144870; display: grid; place-items: center; }
.option svg { fill: none; stroke: #dce4ee; stroke-width: 2.8; stroke-linecap: round; stroke-linejoin: round; margin-top: 1px; }
.album .option { width: 1284px; margin: 0 17px 0 auto; }
.refresh { letter-spacing: .3px; }
.reload { fill: none; stroke: #dce4ee; stroke-width: 1.1; vertical-align: -1px; margin-left: 1px; }
.columns { display: flex; justify-content: space-between; height: 890px; margin-top: 23px; }
.date { width: 452px; display: flex; flex-direction: column; align-items: center; }
.date p { margin: 0; letter-spacing: .13px; }
.date .pick { margin-top: 24px; }
.date .quick { margin-top: 41px; }
.year { width: 210px; margin-top: 12px; }
.year span { padding-top: 1px; }
.year i { width: 42px; }
.calendar { width: 251px; height: 187px; margin: 25px 0 0 1px; background: #4b4b4b; padding: 0 2px 2px; font: 12.800px/20px "Liberation Sans", Arial, sans-serif; color: #000; }
.calhead { height: 34px; display: flex; align-items: flex-start; padding: 3px 1px; color: #fff; line-height: 26px; }
.calhead b { width: 25px; height: 25px; background: #f0f0f0; border: 1px solid #fff; border-right: 2px solid #a0a0a0; border-bottom: 2px solid #a0a0a0; display: grid; place-items: center; }
.calhead b::before { content: ""; border: 7px solid transparent; border-width: 7px 8px; }
.prev::before { border-left-width: 0 !important; border-right-color: #000 !important; }
.next::before { border-right-width: 0 !important; border-left-color: #000 !important; }
.month { width: 86px; text-align: center; }
.gap { margin-left: 15px; }
.yr { width: 44px; text-align: center; }
.days { height: 151px; background: #b3b3b3; display: grid; grid-template-columns: 22px repeat(7, 31px); grid-template-rows: 18px repeat(6, 21px); gap: 1px; text-align: center; }
.days em { font-style: normal; font-size: 12.400px; line-height: 19px; }
.days span { line-height: 22px; }
.days u { text-decoration: none; background: #fff; }
.days .o { background: #ececec; color: #808080; }
.days .w { background: #cbcbcb; color: #606060; }
.days .wo { background: #bfbfbf; color: #7d7d7d; }
.days .sel { background: #0078d7; color: #fff; }
.place { width: 1137px; padding: 15px 10px; }
.search { display: flex; justify-content: space-between; padding: 0 5px; }
.search .entry { width: 874px; letter-spacing: .04px; }
.caret { position: absolute; width: 2px; height: 24px; top: 5px; margin-left: -1px; background: #a8acb0; }
button.small { width: 120px; }
.map { position: relative; margin-top: 8px; width: 1117px; height: 760px; border-radius: 7px; overflow: hidden; }
.map svg { display: block; }
.zoom { position: absolute; left: 19px; top: 19px; display: flex; flex-direction: column; gap: 8px; }
.zoom span { width: 32px; height: 32px; border-radius: 2px; background: #333; color: #fff; font: 20px/34px Roboto, sans-serif; text-align: center; }
.gps { display: flex; justify-content: space-between; padding: 8px 5px 0; align-items: center; letter-spacing: -.06px; }
button.submit { width: 1620px; height: 74px; margin-top: 38px; font: 24px "Liberation Sans", Arial, sans-serif; letter-spacing: .25px; }

/* map features */
.tree { fill: none; stroke: #8caf80; stroke-width: .9; }
.dots { fill: none; stroke: #8fa964; stroke-width: 1; stroke-dasharray: 1.5 6; }
.reserve { fill: none; stroke: #82bfac; stroke-width: 3; }
.reserve.thin { stroke-width: 1.8; }
.coast { stroke: #ae8fa8; stroke-width: 5; stroke-linejoin: round; }
.shore { fill: none; stroke: #808b84; stroke-width: 2; }
.street { fill: none; stroke: #fff; stroke-width: 3.6; stroke-linejoin: round; }
.street.big { stroke-width: 6; }
.street.fine { stroke-width: 3.4; opacity: .85; }
.track { fill: none; stroke: #a08d3f; stroke-width: 3; stroke-dasharray: 14 8; opacity: .75; }
.marsh { fill: none; stroke: #4b9fd0; stroke-width: 1; }
.white { fill: none; stroke: #fff; stroke-width: 2.2; stroke-linejoin: round; }
.road { fill: none; stroke: #f5f8b9; stroke-width: 4; stroke-linejoin: round; }
.pri { fill: none; stroke: #fbcf9a; stroke-width: 4.5; }
.roadcase, .pricase { filter: brightness(.66) saturate(.8); }
.roadcase { transform: translate(.6px, .6px); }
.pricase { transform: translate(.7px, .7px); }
.cycle { fill: none; stroke: #3b53b5; stroke-width: 1; stroke-dasharray: 2 2; }
.ferry { fill: none; stroke: #6c80ee; stroke-width: 1; stroke-dasharray: 6 5; }
.shield rect { fill: #f1efcf; stroke: #c6c69c; stroke-width: 1; }
.shield .major { fill: #f8e3cb; stroke: #d6b18e; }
.shield .national { fill: #f3cfc6; stroke: #cf9a8c; }
.map text { font-family: "Noto Sans", sans-serif; font-size: 10px; paint-order: stroke; stroke: rgba(255, 255, 255, .6); stroke-width: 2px; stroke-linejoin: round; }
.map .ref text { font-size: 10px; stroke: none; fill: #3f4020; }
.map .town text { font-size: 12px; fill: #222; stroke-width: 2.5px; }
.map .green text { fill: #188a2c; }
.map .green.big text { font-size: 14.5px; font-style: italic; stroke-width: 1px; }
.map .brown text { fill: #9b7c38; font-size: 10px; font-style: italic; }
.map .brown .bank { font-size: 11.5px; }
.map .peak text { fill: #73452a; font-size: 10px; stroke: none; }
.map .sport text { fill: #286b4a; font-size: 10.5px; font-style: italic; }
.map .aero text { fill: #7d5cb0; font-size: 10px; font-style: italic; }
.map .ferrytext text { fill: #5c70e8; stroke: none; }
.map .roadtext text { fill: #2b2b10; font-size: 8.6px; stroke: rgba(247, 250, 191, .8); }
.map .admin text { fill: #87609a; }
.map .water text { fill: #4f7fae; font-style: italic; }
.map .marker { font-weight: bold; font-size: 15px; fill: #542a20; stroke: none; }
```
